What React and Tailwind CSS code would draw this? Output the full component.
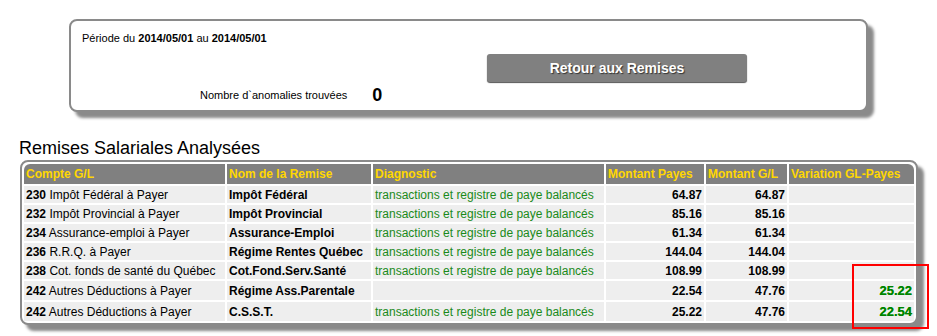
const rows = [
  { code: '230', compte: 'Impôt Fédéral à Payer', nom: 'Impôt Fédéral', diag: true, payes: '64.87', gl: '64.87' },
  { code: '232', compte: 'Impôt Provincial à Payer', nom: 'Impôt Provincial', diag: true, payes: '85.16', gl: '85.16' },
  { code: '234', compte: 'Assurance-emploi à Payer', nom: 'Assurance-Emploi', diag: true, payes: '61.34', gl: '61.34' },
  { code: '236', compte: 'R.R.Q. à Payer', nom: 'Régime Rentes Québec', diag: true, payes: '144.04', gl: '144.04' },
  { code: '238', compte: 'Cot. fonds de santé du Québec', nom: 'Cot.Fond.Serv.Santé', diag: true, payes: '108.99', gl: '108.99' },
  { code: '242', compte: 'Autres Déductions à Payer', nom: 'Régime Ass.Parentale', diag: false, payes: '22.54', gl: '47.76', variation: '25.22' },
  { code: '242', compte: 'Autres Déductions à Payer', nom: 'C.S.S.T.', diag: true, payes: '25.22', gl: '47.76', variation: '22.54' },
];

const headers = ['Compte G/L', 'Nom de la Remise', 'Diagnostic', 'Montant Payes', 'Montant G/L', 'Variation GL-Payes'];
const widths = ['w-[201px]', 'w-[144px]', 'w-[231px]', 'w-[98px]', 'w-[81px]', 'w-[125px]'];

export default function App() {
  return (
    <div className="relative w-[937px] h-[336px] bg-white text-black font-['Liberation_Sans',Arial,sans-serif] overflow-hidden">
      {/* Period summary */}
      <div className="ml-[69px] pt-[19px]">
        <div className="w-[799px] h-[93px] border-2 border-[#8a8a8a] rounded-[8px] bg-white shadow-[6px_6px_3px_#8a8a8a] pl-[11px] pt-[11px]">
          <div className="text-[11px] leading-[13px]">
            Période du <b>2014/05/01</b> au <b>2014/05/01</b>
          </div>
          <div className="ml-[405px] mt-[9px] w-[260px] h-[28px] rounded-[3px] bg-[#808080] shadow-[0_1px_1px_#555] flex items-center justify-center text-white font-bold text-[14px] [text-shadow:1px_1px_1px_#333]">
            Retour aux Remises
          </div>
          <div className="ml-[118px] mt-[3px] flex items-center h-[20px]">
            <span className="text-[11px]">Nombre d`anomalies trouvées</span>
            <span className="ml-[25px] font-bold text-[18px] leading-[20px]">0</span>
          </div>
        </div>
      </div>

      <h2 className="ml-[19px] mt-[26px] text-[18px] leading-[20px]">Remises Salariales Analysées</h2>

      <div className="ml-[20px] mt-[2px] w-[898px] border-2 border-[#8a8a8a] rounded-[8px] bg-white shadow-[6px_6px_3px_#8a8a8a]">
        <table className="table-fixed border-separate border-spacing-[2px] text-[12px] leading-[14px]">
          <thead>
            <tr className="h-[20px]">
              {headers.map((h, i) => (
                <th
                  key={h}
                  className={`${widths[i]} bg-[#808080] text-[#ffd700] font-bold text-left px-[2px] py-0 ${i === 0 ? 'rounded-tl-[6px]' : ''} ${i === 5 ? 'rounded-tr-[6px]' : ''}`}
                >
                  {h}
                </th>
              ))}
            </tr>
          </thead>
          <tbody>
            {rows.map((r, i) => (
              <tr key={i} className={r.variation ? 'h-[19px]' : 'h-[17px]'}>
                <td className="bg-[#eeeeee] px-[2px] py-0 whitespace-nowrap">
                  <b>{r.code}</b> {r.compte}
                </td>
                <td className="bg-[#eeeeee] px-[2px] py-0 font-bold whitespace-nowrap">{r.nom}</td>
                <td className="bg-[#eeeeee] px-[2px] py-0 text-[#1a8a1a] whitespace-nowrap">
                  {r.diag ? 'transactions et registre de paye balancés' : ''}
                </td>
                <td className="bg-[#eeeeee] px-[2px] py-0 font-bold text-right">{r.payes}</td>
                <td className="bg-[#eeeeee] px-[2px] py-0 font-bold text-right">{r.gl}</td>
                <td className="bg-[#eeeeee] px-[2px] py-0 font-bold text-right text-[13px] text-[#008000] [text-shadow:0_0_0.5px_#0a0]">
                  {r.variation || ''}
                </td>
              </tr>
            ))}
          </tbody>
        </table>
      </div>

      {/* highlight around the variations */}
      <div className="absolute left-[852px] top-[264px] w-[77px] h-[65px] border-2 border-[#ff0000]" />
    </div>
  );
}
